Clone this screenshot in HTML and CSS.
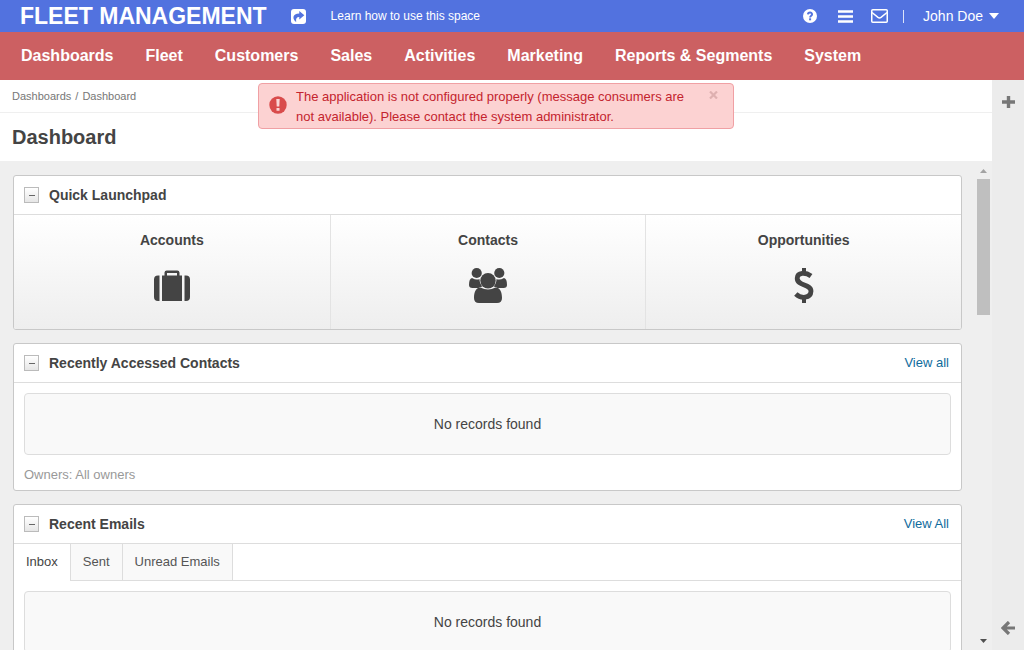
FILE: index.html
```html
<!DOCTYPE html>
<html lang="en">
<head>
<meta charset="utf-8">
<title>Dashboard - Fleet Management</title>
<link rel="stylesheet" href="styles.css">
</head>
<body>
<header class="topbar">
  <a class="brand" href="#">FLEET MANAGEMENT</a>
  <button class="icon-btn share" type="button" aria-label="Share">
    <svg width="15" height="15" viewBox="0 0 15 15"><rect width="15" height="15" rx="3" fill="#fff"/><path d="M8.300 2 13.300 6.200 8.300 10.400V8C5.800 7.900 4.600 9.500 5.200 13 1.200 10.500 1 4.500 8.300 4.500z" fill="#5272df"/></svg>
  </button>
  <a class="learn" href="#">Learn how to use this space</a>
  <div class="tools">
    <button class="icon-btn help" type="button" aria-label="Help">
      <svg width="14" height="14" viewBox="0 0 14 14"><circle cx="7" cy="7" r="7" fill="#fff"/><path d="M4.900 5.300C5.100 2.900 9.100 2.900 9.100 5.200 9.100 6.700 7.100 6.700 7.100 8.400" fill="none" stroke="#5272df" stroke-width="1.900"/><rect x="6.100" y="9.300" width="2" height="2" fill="#5272df"/></svg>
    </button>
    <button class="icon-btn" type="button" aria-label="Shortcuts">
      <svg width="15" height="13" viewBox="0 0 15 13"><path d="M0 1.500h15M0 6.500h15M0 11.500h15" stroke="#fff" stroke-width="2.400"/></svg>
    </button>
    <button class="icon-btn mail" type="button" aria-label="Emails">
      <svg width="17" height="14" viewBox="0 0 17 14"><rect x=".75" y=".75" width="15.500" height="12.500" rx="1" fill="none" stroke="#fff" stroke-width="1.500"/><path d="M1 3.500 7 8.400Q8.500 9.500 10 8.400L16 3.500" fill="none" stroke="#fff" stroke-width="1.500"/></svg>
    </button>
    <span class="divider"></span>
    <button class="user" type="button">John Doe
      <svg width="10" height="6" viewBox="0 0 10 6"><path d="M0 0h10L5 6z" fill="#fff"/></svg>
    </button>
  </div>
</header>
<nav class="menu">
  <a href="#">Dashboards</a>
  <a href="#">Fleet</a>
  <a href="#">Customers</a>
  <a href="#">Sales</a>
  <a href="#">Activities</a>
  <a href="#">Marketing</a>
  <a href="#">Reports &amp; Segments</a>
  <a href="#">System</a>
</nav>
<div class="page">
  <main class="main">
    <div class="crumbs"><a href="#">Dashboards</a><span>/</span><span>Dashboard</span></div>
    <h1 class="title">Dashboard</h1>
    <div class="scroller">
      <div class="widgets">
        <section class="widget">
          <div class="widget-head">
            <button class="toggle" type="button" aria-label="Collapse Quick Launchpad"></button>
            <h2>Quick Launchpad</h2>
          </div>
          <div class="launchpad">
            <a href="#">Accounts
              <svg width="36" height="40" viewBox="0 0 36 40"><path d="M5.500 9.500V35H4a4 4 0 0 1-4-4V13.500a4 4 0 0 1 4-4zM30.500 9.500V35H32a4 4 0 0 0 4-4V13.500a4 4 0 0 0-4-4zM8 9.500h2.500V6.500A2.200 2.200 0 0 1 12.700 4.500h10.600a2.200 2.200 0 0 1 2.200 2V9.500H28V35H8zM13 9.500h10V7H13z" fill="#444" fill-rule="evenodd"/></svg>
            </a>
            <a href="#">Contacts
              <svg width="38" height="40" viewBox="0 0 38 40"><g fill="#444"><circle cx="7.700" cy="7" r="5.100"/><circle cx="30.300" cy="7" r="5.100"/><path d="M3 12q4.500 2.600 7.500 1 0 5 3 7.500-2 .2-4 1.500H3.500Q0 22 0 19 0 12.500 3 12zM35 12q-4.500 2.600-7.500 1 0 5-3 7.500 2 .2 4 1.500h6Q38 22 38 19 38 12.500 35 12z"/><circle cx="19" cy="14.700" r="7.700"/><path d="M11.500 21.500q7.500 4.200 15 0C31 21.500 33 26 33 32q0 5-5 5H10q-5 0-5-5C5 26 7 21.500 11.500 21.500z"/></g></svg>
            </a>
            <a href="#">Opportunities
              <svg width="20" height="40" viewBox="0 0 20 40"><path d="M17 10C11.500 6 3.500 6.200 3.200 12 3 20.500 17 17.500 17 25.200 16.700 32.500 7 33 1.800 28" fill="none" stroke="#444" stroke-width="4.800"/><path d="M10 2v5M10 31v6" stroke="#444" stroke-width="4"/></svg>
            </a>
          </div>
        </section>
        <section class="widget">
          <div class="widget-head">
            <button class="toggle" type="button" aria-label="Collapse Recently Accessed Contacts"></button>
            <h2>Recently Accessed Contacts</h2>
            <a class="view" href="#">View all</a>
          </div>
          <div class="widget-body">
            <div class="empty">No records found</div>
            <div class="owners">Owners: All owners</div>
          </div>
        </section>
        <section class="widget">
          <div class="widget-head">
            <button class="toggle" type="button" aria-label="Collapse Recent Emails"></button>
            <h2>Recent Emails</h2>
            <a class="view" href="#">View All</a>
          </div>
          <div class="tabs">
            <button class="tab active" type="button">Inbox</button>
            <button class="tab" type="button">Sent</button>
            <button class="tab" type="button">Unread Emails</button>
          </div>
          <div class="widget-body">
            <div class="empty">No records found</div>
          </div>
        </section>
      </div>
      <div class="scrollbar">
        <svg width="7" height="4" viewBox="0 0 7 4"><path d="M0 4 3.500 0 7 4z" fill="#a3a3a3"/></svg>
        <div class="track"><div class="thumb"></div></div>
        <svg width="7" height="4" viewBox="0 0 7 4"><path d="M0 0 3.500 4 7 0z" fill="#505050"/></svg>
      </div>
    </div>
  </main>
  <aside class="sidebar">
    <button class="icon-btn" type="button" aria-label="Add widget">
      <svg width="13" height="12" viewBox="0 0 13 12"><path d="M6.500 0v12M0 6h13" stroke="#777" stroke-width="3.400"/></svg>
    </button>
    <button class="icon-btn" type="button" aria-label="Expand sidebar">
      <svg width="14" height="14" viewBox="0 0 14 14"><path d="M8 1 2 7l6 6M2.500 7H14" fill="none" stroke="#777" stroke-width="3.200"/></svg>
    </button>
  </aside>
  <div class="alert" role="alert">
    <svg width="18" height="18" viewBox="0 0 18 18"><circle cx="9" cy="9" r="8.700" fill="#d94b4b"/><path d="M7.300 3h3.400l-.4 7.500H7.700zM7.500 12h3v2.700h-3z" fill="#fbd5d5"/></svg>
    <p>The application is not configured properly (message consumers are not available). Please contact the system administrator.</p>
    <button class="icon-btn close" type="button" aria-label="Close">
      <svg width="9" height="8" viewBox="0 0 9 8"><path d="M1 .5l7 7M8 .5l-7 7" stroke="#deb0b0" stroke-width="2.200"/></svg>
    </button>
  </div>
</div>
</body>
</html>
```
FILE: styles.css
```css
* { box-sizing: border-box; }
body {
  margin: 0;
  height: 100vh;
  display: flex;
  flex-direction: column;
  overflow: hidden;
  font: 13px/20px "Liberation Sans", Arial, sans-serif;
  color: #444;
  background: #efefef;
}
a { color: inherit; text-decoration: none; }
button { font: inherit; color: inherit; border: 0; padding: 0; background: none; cursor: pointer; }
svg { display: block; flex: none; }
h1, h2, p { margin: 0; }

.topbar {
  flex: none;
  display: flex;
  align-items: center;
  height: 32px;
  padding: 0 25px 0 20px;
  background: #5272df;
  color: #fff;
}
.brand { font-size: 23px; line-height: 32px; font-weight: bold; }
.share { margin-left: 24px; }
.learn { margin-left: 25px; font-size: 12px; }
.tools { display: flex; align-items: center; margin-left: auto; }
.tools .icon-btn { margin-right: 18px; }
.tools .help { margin-right: 21px; }
.tools .mail { margin-right: 15px; }
.divider { width: 1px; height: 13px; margin-right: 19px; background: #dce3f9; }
.user { display: flex; align-items: center; gap: 6px; font-size: 14px; }

.menu {
  flex: none;
  display: flex;
  gap: 32px;
  padding: 0 21px;
  background: #cc6062;
  color: #fff;
  font-size: 16px;
  font-weight: bold;
  line-height: 48px;
}

.page { position: relative; flex: 1; min-height: 0; display: flex; }
.main { flex: 1; min-width: 0; display: flex; flex-direction: column; background: #fff; }
.crumbs {
  flex: none;
  display: flex;
  gap: 4px;
  padding: 0 12px;
  border-bottom: 1px solid #efefef;
  font-size: 11px;
  line-height: 32px;
  color: #777;
}
.title { flex: none; padding: 0 12px; font-size: 20px; line-height: 48px; }

.scroller { flex: 1; min-height: 0; display: flex; background: #efefef; overflow: hidden; }
.widgets {
  flex: 1;
  display: flex;
  flex-direction: column;
  gap: 13px;
  padding: 14px 15px 0 13px;
}
.widget { flex: none; border: 1px solid #c8c8c8; border-radius: 3px; background: #fff; overflow: hidden; }
.widget-head {
  display: flex;
  align-items: center;
  gap: 10px;
  height: 39px;
  padding: 0 12px 0 10px;
  border-bottom: 1px solid #ddd;
}
.widget-head h2 { font-size: 14px; line-height: 20px; }
.toggle {
  display: flex;
  align-items: center;
  justify-content: center;
  width: 15px;
  height: 16px;
  border: 1px solid #bbb;
  background: linear-gradient(#fff, #e6e6e6);
}
.toggle::before { content: ""; width: 6px; height: 1px; background: #666; }
.view { margin-left: auto; line-height: 22px; color: #0f6b9c; }

.launchpad {
  display: grid;
  grid-template-columns: repeat(3, 1fr);
  background: linear-gradient(#fff, #eee);
}
.launchpad a {
  display: flex;
  flex-direction: column;
  align-items: center;
  gap: 16px;
  padding: 15px 0 23px;
  border-left: 1px solid #e3e3e3;
  font-size: 14px;
  font-weight: bold;
}
.launchpad a:first-child { border-left: 0; }

.widget-body { padding: 10px; }
.empty {
  padding: 20px;
  border: 1px solid #ddd;
  border-radius: 4px;
  background: #f9f9f9;
  text-align: center;
  font-size: 14px;
}
.owners { margin: 10px 0 -5px; color: #999; }

.tabs { display: flex; border-bottom: 1px solid #ddd; }
.tab {
  height: 36px;
  padding: 0 12px;
  border-right: 1px solid #ddd;
  background: #f9f9f9;
  color: #555;
}
.tab.active { height: 37px; margin-bottom: -1px; padding-bottom: 1px; background: #fff; color: #444; }

.scrollbar {
  flex: none;
  display: flex;
  flex-direction: column;
  align-items: center;
  gap: 6px;
  width: 13px;
  margin-right: 2px;
  padding: 8px 0 7px;
}
.track { flex: 1; width: 100%; }
.thumb { height: 30%; background: #bfbfbf; }

.sidebar {
  flex: none;
  display: flex;
  flex-direction: column;
  justify-content: space-between;
  align-items: center;
  width: 32px;
  padding: 16px 0 15px;
  background: #ececec;
}

.alert {
  position: absolute;
  top: 3px;
  left: 0;
  right: 32px;
  width: 476px;
  margin: 0 auto;
  display: flex;
  align-items: center;
  padding: 3px 15px 1px 10px;
  border: 1px solid #f0a0a4;
  border-radius: 4px;
  background: #fcd2d2;
  color: #c4242e;
}
.alert p { flex: 1; margin-left: 9px; padding-right: 24px; }
.alert > svg { margin-bottom: 4px; }
.close { align-self: flex-start; margin-top: 4px; }
```
